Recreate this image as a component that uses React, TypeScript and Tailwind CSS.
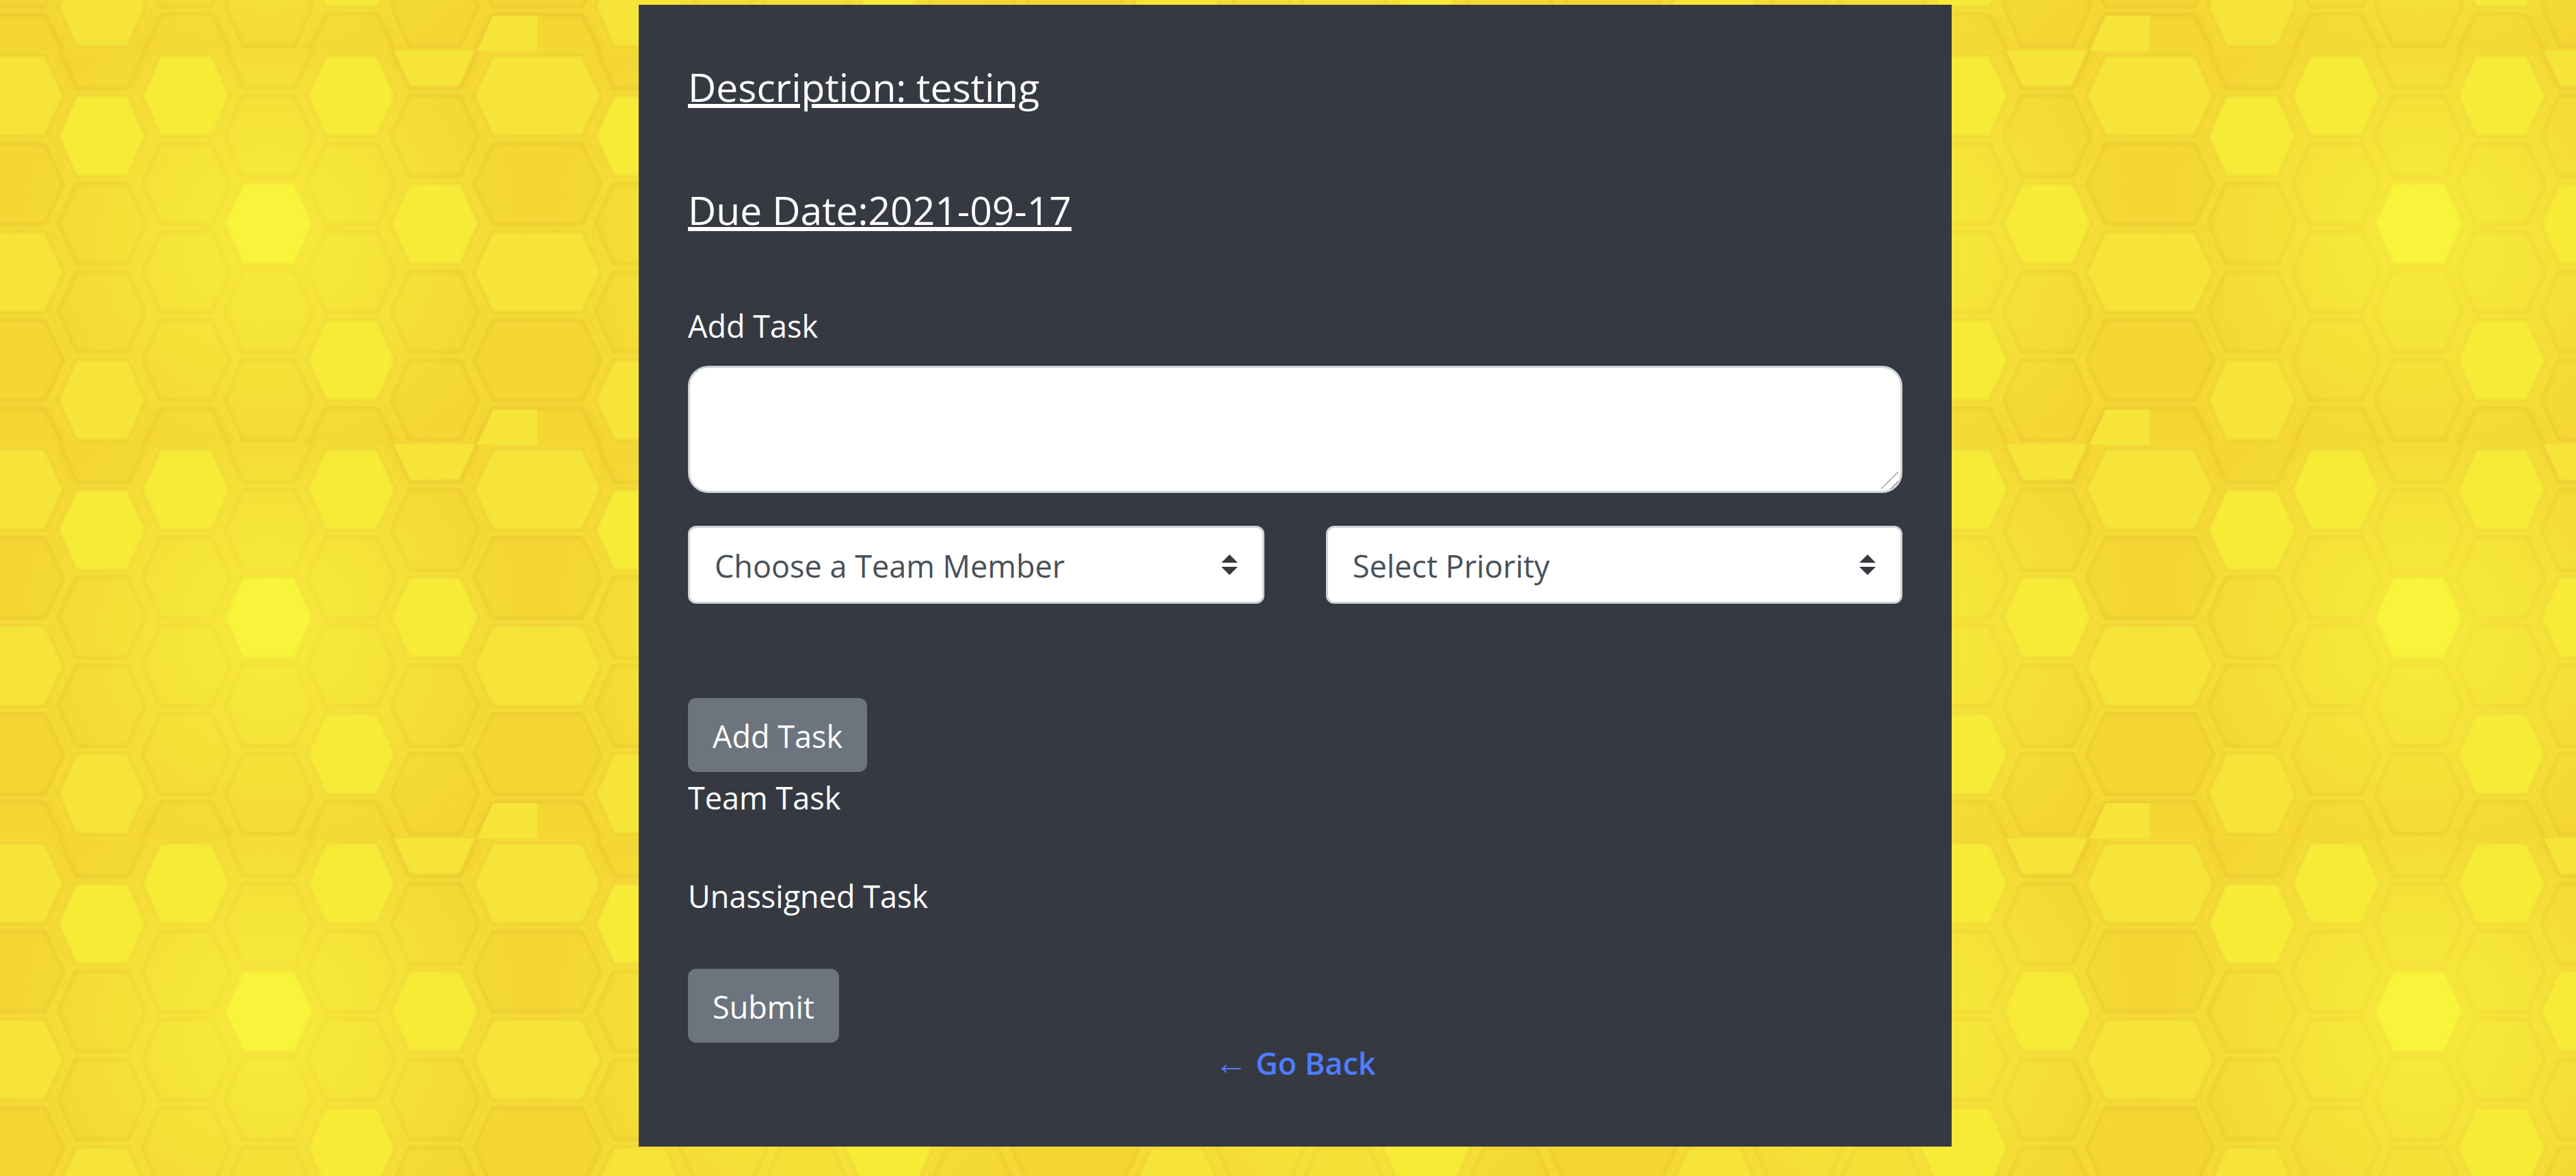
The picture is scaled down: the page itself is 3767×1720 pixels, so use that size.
import React from "react";

type Tone = "glow" | "bright" | "light" | "plain";
type Cell = { x: number; y: number; h: number; tone: Tone; wide?: boolean };

const FILL: Record<Tone, string> = {
  glow: "#f9f43b",
  bright: "#f7eb38",
  light: "#f6e538",
  plain: "none",
};

const EVEN_ROWS = [8, 137, 266, 395];
const ODD_ROWS = [67, 195, 324, 453];

const column = (x: number, rows: number[], tones: Tone[], wide = false): Cell[] =>
  rows.map((y, i) => ({ x, y, h: 116, tone: tones[i], wide }));

const CELLS: Cell[] = [
  ...column(0, EVEN_ROWS, ["light", "plain", "light", "plain"], true),
  ...column(786, EVEN_ROWS, ["light", "plain", "light", "plain"], true),
  ...column(149, ODD_ROWS, ["bright", "plain", "plain", "light"]),
  ...column(272, EVEN_ROWS, ["bright", "plain", "plain", "plain"]),
  ...column(393, ODD_ROWS, ["plain", "glow", "plain", "plain"]),
  ...column(514, EVEN_ROWS, ["bright", "plain", "plain", "bright"]),
  ...column(636, ODD_ROWS, ["plain", "bright", "plain", "plain"]),
];

function hexPath(cx: number, y: number, h: number, wide: boolean | undefined, grow: number) {
  const flat = (wide ? 65 : 37) + grow / 2;
  const tip = (wide ? 92 : 63) + grow;
  const top = y - grow;
  const bottom = y + h + grow;
  const mid = y + h / 2;
  return `M${cx - flat} ${top}H${cx + flat}L${cx + tip} ${mid}L${cx + flat} ${bottom}H${cx - flat}L${cx - tip} ${mid}Z`;
}

function Honeycomb() {
  return (
    <svg aria-hidden="true" className="absolute inset-0 h-full w-full">
      <defs>
        <radialGradient id="sun" gradientUnits="userSpaceOnUse" cx="394" cy="270" r="390">
          <stop offset="0" stopColor="#f7ed3d" />
          <stop offset="0.4" stopColor="#f5e439" />
          <stop offset="0.95" stopColor="#f4d634" />
        </radialGradient>
        <radialGradient id="groove" gradientUnits="userSpaceOnUse" cx="394" cy="270" r="390">
          <stop offset="0" stopColor="#e8d534" stopOpacity="0.2" />
          <stop offset="0.4" stopColor="#e6cb32" stopOpacity="0.45" />
          <stop offset="1" stopColor="#e6c02e" stopOpacity="0.7" />
        </radialGradient>
        <filter id="soft" x="-5%" y="-5%" width="110%" height="110%">
          <feGaussianBlur stdDeviation="2" />
        </filter>
        <pattern
          id="comb"
          width="786"
          height="576"
          patternUnits="userSpaceOnUse"
          patternTransform="translate(0 74)"
        >
          <rect width="786" height="576" fill="url(#sun)" />
          <g filter="url(#soft)">
            <g fill="none" stroke="#f7e23a" strokeOpacity="0.5" strokeWidth="6">
              {CELLS.map((c, i) => (
                <path key={i} d={hexPath(c.x, c.y, c.h, c.wide, 6)} />
              ))}
            </g>
            <g fill="none" stroke="url(#groove)" strokeWidth="4">
              {CELLS.map((c, i) => (
                <path key={i} d={hexPath(c.x, c.y, c.h, c.wide, 1)} />
              ))}
              <path d="M-65 576V523H65L92 576M721 523H851M694 576L721 523" />
              <path d="M210 576L236 523H310L336 576M451 576L477 523H551L577 576" />
              <path d="M87 0L113 56H187L213 0M331 0L357 56H431L457 0M573 0L599 56H673L699 0" />
            </g>
            {CELLS.filter((c) => c.tone !== "plain").map((c, i) => (
              <path key={i} d={hexPath(c.x, c.y, c.h, c.wide, 0)} fill={FILL[c.tone]} />
            ))}
          </g>
          <path d="M576 0H694L671 51H600Z" fill="#f6e538" />
          <path d="M786 576H698L721 525H786Z" fill="#f6e538" />
        </pattern>
      </defs>
      <rect width="100%" height="100%" fill="url(#comb)" />
    </svg>
  );
}

function Select({ label, name }: { label: string; name: string }) {
  return (
    <div className="relative">
      <select
        name={name}
        aria-label={label}
        className="block h-[114px] w-full appearance-none rounded-xl border-3 border-[#ced4da] bg-white pt-1 pr-[84px] pl-9 text-[45px] text-[#495057]"
      >
        <option>{label}</option>
      </select>
      <svg
        aria-hidden="true"
        viewBox="0 0 4 5"
        className="pointer-events-none absolute top-[42px] right-[39px] h-[30px] w-6 fill-[#343a40]"
      >
        <path d="M2 0L0 2h4zm0 5L0 3h4z" />
      </svg>
    </div>
  );
}

const buttonClass =
  "flex h-[108px] items-center self-start rounded-xl bg-[#6c757d] px-9 pt-1 text-[45px] leading-[72px] text-white";

export default function App() {
  return (
    <div className="relative grid min-h-screen grid-cols-[934fr_1920fr_913fr] items-start bg-[#f5e038] pt-[7px] pb-[42px] font-['Open_Sans','Noto_Sans',sans-serif] text-[45px] leading-[72px] text-white">
      <Honeycomb />
      <main className="relative col-start-2 flex flex-col bg-[#363942] px-[72px] pt-[84px] pb-[92px]">
        <h2 className="text-[57px] underline decoration-[6px] underline-offset-[3px]">
          Description: testing
        </h2>
        <h2 className="mt-[108px] text-[57px] underline decoration-[6px] underline-offset-[3px]">
          Due Date:2021-09-17
        </h2>
        <form className="mt-[98px] flex flex-col" onSubmit={(e) => e.preventDefault()}>
          <label htmlFor="task">Add Task</label>
          <div className="relative mt-[22px]">
            <textarea
              id="task"
              className="block h-[186px] w-full resize-none rounded-[30px] border-3 border-[#ced4da] bg-white px-9 py-4 text-[#495057]"
            />
            <svg
              aria-hidden="true"
              viewBox="0 0 30 30"
              className="pointer-events-none absolute right-[3px] bottom-[3px] h-[30px] w-[30px] fill-none stroke-[#4a4d55]"
            >
              <path d="M2 27L27 2M16 27L27 16" />
            </svg>
          </div>
          <div className="mt-12 grid grid-cols-2 gap-[90px]">
            <Select label="Choose a Team Member" name="member" />
            <Select label="Select Priority" name="priority" />
          </div>
          <button type="button" className={`mt-[138px] ${buttonClass}`}>
            Add Task
          </button>
          <p className="leading-[76px]">Team Task</p>
          <p className="mt-[68px] leading-[76px]">Unassigned Task</p>
          <button type="submit" className={`mt-[68px] ${buttonClass}`}>
            Submit
          </button>
        </form>
        <a
          href="#back"
          className="flex items-center gap-[12px] self-center leading-[60px] font-semibold text-[#4f7dff]"
        >
          <span className="font-['Liberation_Sans'] text-[48px] leading-[48px] font-normal">←</span>
          <span>Go Back</span>
        </a>
      </main>
    </div>
  );
}
